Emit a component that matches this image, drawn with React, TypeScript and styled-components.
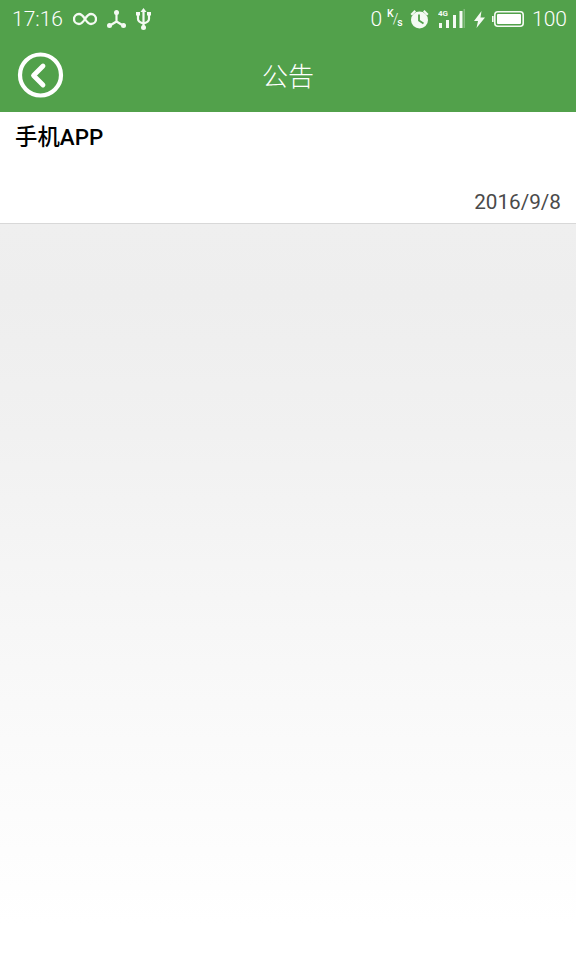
import React from "react";
import styled, { createGlobalStyle } from "styled-components";

const Global = createGlobalStyle`
  html, body { margin: 0; padding: 0; background: #fff; }
  #root { height: 960px; }
`;

const Page = styled.div`
  width: 576px;
  height: 960px;
  display: flex;
  flex-direction: column;
  overflow: hidden;
  font-family: Roboto, "Noto Sans CJK SC", sans-serif;
`;

const Top = styled.div`
  background: #52a14b;
  height: 112px;
  display: flex;
  flex-direction: column;
  flex: none;
`;

const StatusBar = styled.div`
  height: 38px;
  display: flex;
  align-items: center;
  justify-content: space-between;
  padding: 0 9px 0 12px;
  color: #ffffff;
  font-size: 21px;
  font-weight: 300;
`;

const StatusGroup = styled.div`
  display: flex;
  align-items: center;
`;

const StatusText = styled.span<{ $mr?: number }>`
  margin-right: ${(p) => p.$mr ?? 0}px;
  line-height: 38px;
`;

const Speed = styled.span`
  width: 14px;
  margin: 0 9px 0 5px;
  white-space: nowrap;
  line-height: 1;
  font-weight: 400;
  display: flex;
  align-items: center;
`;

const SpeedLetter = styled.span<{ $up?: boolean }>`
  font-size: 10.5px;
  font-weight: 500;
  transform: translateY(${(p) => (p.$up ? -5 : 4)}px);
`;

const SpeedSlash = styled.span`
  font-size: 14px;
  font-weight: 300;
  margin: 0 -1px;
`;

const Icon = styled.svg<{ $mr?: number }>`
  display: block;
  flex: none;
  margin-right: ${(p) => p.$mr ?? 0}px;
`;

const Header = styled.header`
  flex: 1;
  position: relative;
  display: flex;
  align-items: center;
  justify-content: center;
  padding-bottom: 1px;
`;

const BackButton = styled.button`
  position: absolute;
  left: 17px;
  top: 13px;
  width: 47px;
  height: 47px;
  padding: 0;
  border: 0;
  background: none;
`;

const Title = styled.h1`
  margin: 0;
  color: #ffffff;
  font-size: 26px;
  font-weight: 300;
  font-family: "Noto Sans CJK SC", sans-serif;
`;

const Row = styled.div`
  height: 112px;
  flex: none;
  box-sizing: border-box;
  background: #fff;
  border-bottom: 1px solid #d8d8d8;
  padding: 11px 15px 9px 15px;
  display: flex;
  flex-direction: column;
  justify-content: space-between;
`;

const RowTitle = styled.div`
  color: #000;
  font-size: 22.4px;
  line-height: 28px;
  font-weight: 500;
  font-family: Roboto, "Noto Sans CJK SC", sans-serif;
`;

const RowDate = styled.div`
  color: #4a4a4a;
  font-size: 20.7px;
  line-height: 24px;
  text-align: right;
`;

const Body = styled.main`
  flex: 1;
  background: linear-gradient(#efefef 0%, #eeeeee 10%, #f1f1f1 30%, #f7f7f7 58%, #ffffff 100%);
  background-size: 100% 700px;
  background-repeat: no-repeat;
`;

const C = "#f4faf3";

export default function App() {
  return (
    <Page>
      <Global />
      <Top>
        <StatusBar>
          <StatusGroup>
            <StatusText $mr={10}>17:16</StatusText>
            <Icon $mr={10} width="24" height="14" viewBox="0 0 24 14" fill="none" stroke={C} strokeWidth="2.300">
              <path d="M12 7C9.800 3.500 8.500 2 6 2a5 5 0 0 0 0 10c2.500 0 3.800-1.500 6-5 2.200-3.500 3.500-5 6-5a5 5 0 0 1 0 10c-2.500 0-3.800-1.500-6-5z" />
            </Icon>
            <Icon $mr={10} width="19" height="18" viewBox="0 0 19 18" fill="none" stroke={C} strokeWidth="2.200">
              <path d="M9.500 3v8.500M9.500 11.500L3 15.500M9.500 11.500l6.500 4" />
              <circle cx="9.500" cy="2.500" r="2.500" fill={C} stroke="none" />
              <circle cx="2.500" cy="15.500" r="2.500" fill={C} stroke="none" />
              <circle cx="16.500" cy="15.500" r="2.500" fill={C} stroke="none" />
            </Icon>
            <Icon width="15" height="22" viewBox="0 0 15 22" fill="none" stroke={C} strokeWidth="2.200">
              <path d="M7.500 3v16M2 7v4c0 2.500 2 3.500 5.500 4.500C11 14.500 13 13.500 13 11V7" />
              <path d="M7.500 0l3 4h-6zM0 4h4v3.500H0zM11 4h4v3.500h-4z" fill={C} stroke="none" />
              <circle cx="7.500" cy="19.500" r="2.500" fill={C} stroke="none" />
            </Icon>
          </StatusGroup>
          <StatusGroup>
            <StatusText>0</StatusText>
            <Speed>
              <SpeedLetter $up>K</SpeedLetter>
              <SpeedSlash>/</SpeedSlash>
              <SpeedLetter>s</SpeedLetter>
            </Speed>
            <Icon $mr={9} width="19" height="20" viewBox="0 0 19 20">
              <circle cx="9.500" cy="11" r="8.500" fill={C} />
              <path d="M9 5.500v6l4.500 3" fill="none" stroke="#52a14b" strokeWidth="1.800" />
              <path d="M0.500 5L4.500 1l1.500 1.500L2 6.500zM18.500 5l-4-4L13 2.500l4 4z" fill={C} />
            </Icon>
            <Icon $mr={9} width="27" height="20" viewBox="0 0 27 20">
              <text x="0" y="7" fontSize="8" fontWeight="700" fill={C} fontFamily="Roboto, sans-serif">4G</text>
              <rect x="1" y="14" width="3" height="5" fill={C} />
              <rect x="8" y="11" width="3" height="8" fill={C} />
              <rect x="15" y="6" width="3" height="13" fill={C} />
              <rect x="21.500" y="2" width="3" height="17" fill={C} />
              <rect x="25.500" y="0" width="1.500" height="19" fill={C} opacity="0.3" />
            </Icon>
            <Icon $mr={7} width="11" height="17" viewBox="0 0 11 17">
              <path d="M7.500 0L0 10h4L2.500 17 11 6.500H6.500z" fill={C} />
            </Icon>
            <Icon $mr={8} width="32" height="16" viewBox="0 0 32 16">
              <rect x="2.800" y="0.800" width="28.400" height="14.400" rx="3" fill="none" stroke={C} strokeWidth="1.600" />
              <rect x="5" y="3" width="24" height="10" rx="1" fill="#fff" />
              <rect x="0" y="5" width="1.600" height="6" fill={C} />
            </Icon>
            <StatusText>100</StatusText>
          </StatusGroup>
        </StatusBar>
        <Header>
          <BackButton aria-label="返回">
            <Icon width="47" height="47" viewBox="0 0 47 47" fill="none" stroke="#fff">
              <circle cx="23.500" cy="24" r="20.500" strokeWidth="4.200" />
              <path d="M26 15L16.500 24.500 26 34" strokeWidth="4.800" strokeLinecap="round" strokeLinejoin="round" />
            </Icon>
          </BackButton>
          <Title>公告</Title>
        </Header>
      </Top>
      <Row>
        <RowTitle>手机APP</RowTitle>
        <RowDate>2016/9/8</RowDate>
      </Row>
      <Body />
    </Page>
  );
}
